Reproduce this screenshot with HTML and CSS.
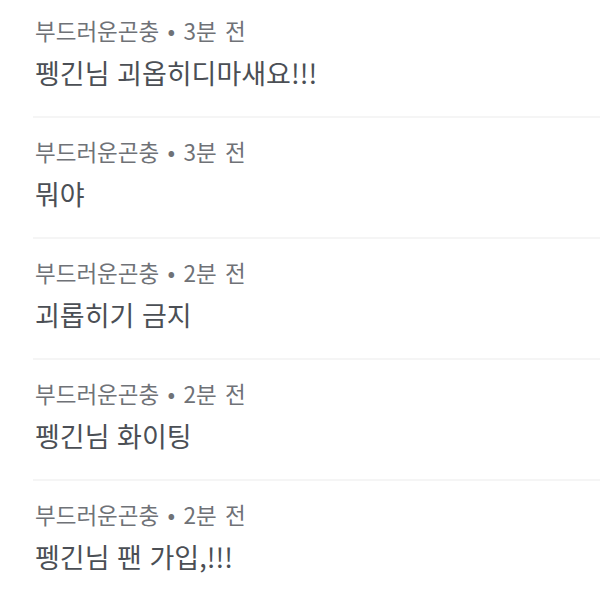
FILE: index.html
```html
<!DOCTYPE html>
<html lang="ko">
<head>
<meta charset="utf-8">
<link rel="stylesheet" href="styles.css">
</head>
<body>
<ul class="comments">
  <li class="comment">
    <div class="meta">부드러운곤충 • 3분 전</div>
    <div class="text">펭긴님 괴옵히디마새요!!!</div>
  </li>
  <li class="comment">
    <div class="meta">부드러운곤충 • 3분 전</div>
    <div class="text">뭐야</div>
  </li>
  <li class="comment">
    <div class="meta">부드러운곤충 • 2분 전</div>
    <div class="text">괴롭히기 금지</div>
  </li>
  <li class="comment">
    <div class="meta">부드러운곤충 • 2분 전</div>
    <div class="text">펭긴님 화이팅</div>
  </li>
  <li class="comment">
    <div class="meta">부드러운곤충 • 2분 전</div>
    <div class="text">펭긴님 팬 가입,!!!</div>
  </li>
</ul>
</body>
</html>
```

FILE: styles.css
```css
html, body {
  margin: 0;
  padding: 0;
  background: #ffffff;
}
body {
  font-family: "Noto Sans CJK KR", "Noto Sans", sans-serif;
  width: 600px;
  height: 600px;
  overflow: hidden;
}
.comments {
  list-style: none;
  margin: -3px 0 0 0;
  padding: 0 0 0 33px;
}
.comment {
  height: 119px;
  border-bottom: 2px solid #f5f5f5;
  padding: 0 0 0 2px;
  display: flex;
  flex-direction: column;
}
.meta {
  margin-top: 18px;
  font-size: 22.5px;
  line-height: 30px;
  color: #6f7277;
  word-spacing: 2px;
}
.text {
  margin-top: 10px;
  font-size: 27px;
  line-height: 36px;
  color: #4b4f55;
}
```
